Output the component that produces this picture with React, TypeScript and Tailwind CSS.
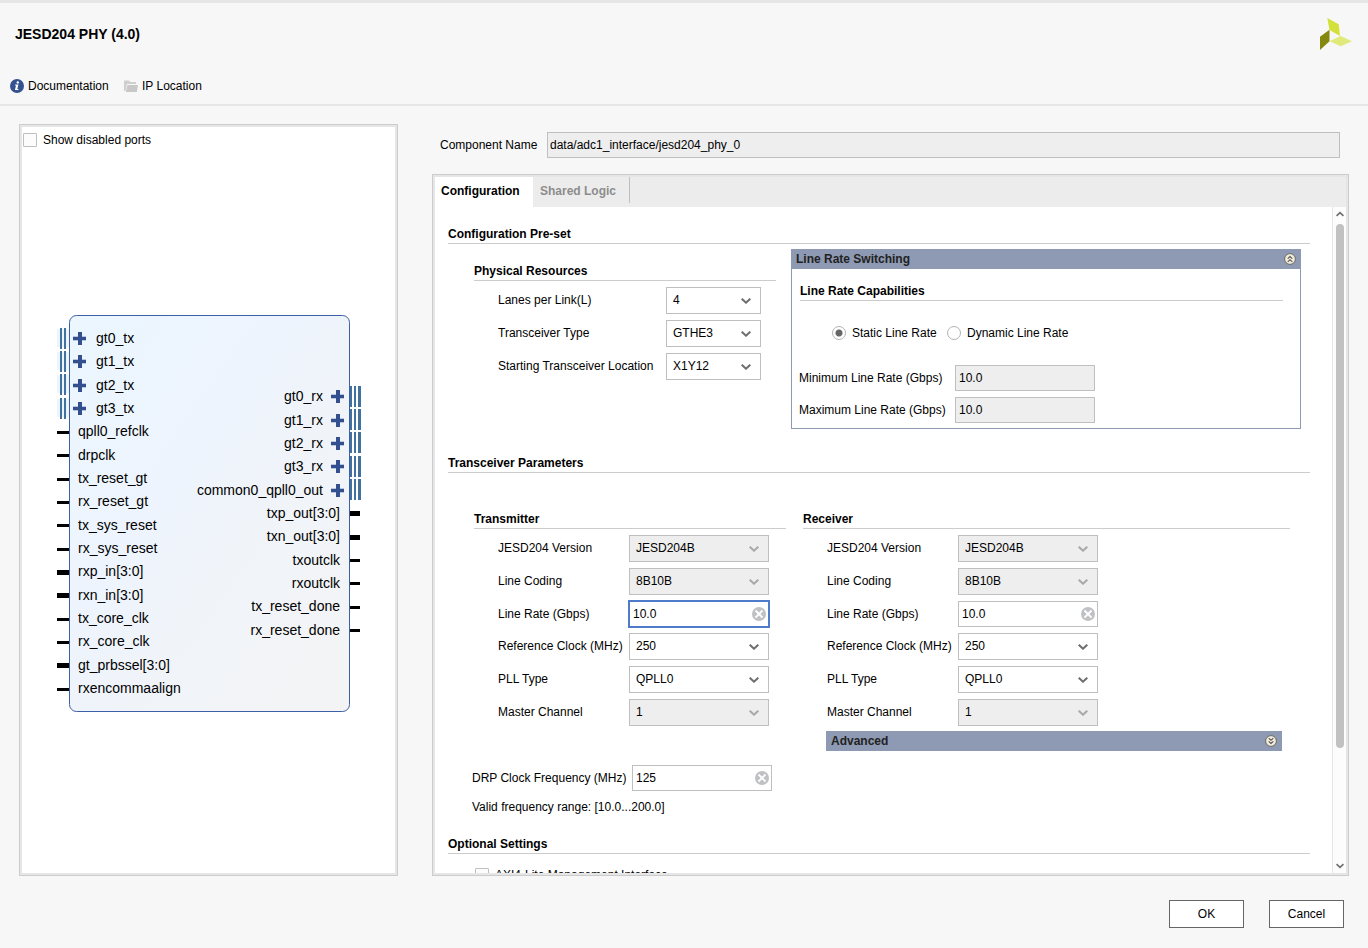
import { useState } from 'react'
import type { ReactNode } from 'react'
import clsx from 'clsx'

type PinKind = 'group' | 'wire' | 'bus'

interface Port {
  name: string
  kind: PinKind
}

const LEFT_PORTS: Port[] = [
  { name: 'gt0_tx', kind: 'group' },
  { name: 'gt1_tx', kind: 'group' },
  { name: 'gt2_tx', kind: 'group' },
  { name: 'gt3_tx', kind: 'group' },
  { name: 'qpll0_refclk', kind: 'wire' },
  { name: 'drpclk', kind: 'wire' },
  { name: 'tx_reset_gt', kind: 'wire' },
  { name: 'rx_reset_gt', kind: 'wire' },
  { name: 'tx_sys_reset', kind: 'wire' },
  { name: 'rx_sys_reset', kind: 'wire' },
  { name: 'rxp_in[3:0]', kind: 'bus' },
  { name: 'rxn_in[3:0]', kind: 'bus' },
  { name: 'tx_core_clk', kind: 'wire' },
  { name: 'rx_core_clk', kind: 'wire' },
  { name: 'gt_prbssel[3:0]', kind: 'bus' },
  { name: 'rxencommaalign', kind: 'wire' },
]

const RIGHT_PORTS: Port[] = [
  { name: 'gt0_rx', kind: 'group' },
  { name: 'gt1_rx', kind: 'group' },
  { name: 'gt2_rx', kind: 'group' },
  { name: 'gt3_rx', kind: 'group' },
  { name: 'common0_qpll0_out', kind: 'group' },
  { name: 'txp_out[3:0]', kind: 'bus' },
  { name: 'txn_out[3:0]', kind: 'bus' },
  { name: 'txoutclk', kind: 'wire' },
  { name: 'rxoutclk', kind: 'wire' },
  { name: 'tx_reset_done', kind: 'wire' },
  { name: 'rx_reset_done', kind: 'wire' },
]

// distance between two ports of the symbol
const PITCH = 70 / 3

function Plus({ x, y }: { x: number; y: number }) {
  return (
    <g>
      <rect x={x} y={y - 2} width={13} height={5} fill="#b9c6e0" />
      <rect x={x} y={y - 1} width={13} height={3} fill="#334f8d" />
      <rect x={x + 5} y={y - 6} width={4} height={13} fill="#334f8d" />
    </g>
  )
}

function Pin({ x, y, width, kind }: { x: number; y: number; width: number; kind: PinKind }) {
  const h = kind === 'bus' ? 5 : 3
  return <rect x={x} y={y - (h - 1) / 2 + 1} width={width} height={h} fill="#000" />
}

function IpSymbol() {
  return (
    <svg width={306} height={397} viewBox="0 0 306 397" className="shrink-0 font-['Liberation_Sans',Arial,sans-serif] text-sm">
      <defs>
        <linearGradient id="symbolFill" x1="0" y1="0" x2="1" y2="1">
          <stop offset="0" stopColor="#ebf6fe" />
          <stop offset="0.4" stopColor="#eef4fd" />
          <stop offset="0.6" stopColor="#f0f4f9" />
          <stop offset="1" stopColor="#f4f4f5" />
        </linearGradient>
      </defs>
      <rect x={13.5} y={0.5} width={280} height={396} rx={7} fill="url(#symbolFill)" stroke="#3d5fa5" />
      {LEFT_PORTS.map((p, i) => {
        const y = Math.round(23 + i * PITCH)
        const pinY = Math.floor(23 + i * PITCH)
        return (
          <g key={p.name}>
            {p.kind === 'group' ? (
              <>
                <rect x={1} y={pinY - 9} width={12} height={18} fill="#edf5fc" />
                <rect x={4} y={pinY - 10} width={2} height={21} fill="#41719f" />
                <rect x={8} y={pinY - 10} width={2} height={21} fill="#41719f" />
                <Plus x={17} y={y} />
              </>
            ) : (
              <Pin x={1} y={pinY} width={12} kind={p.kind} />
            )}
            <text x={p.kind === 'group' ? 40 : 22} y={y + 5}>{p.name}</text>
          </g>
        )
      })}
      {RIGHT_PORTS.map((p, i) => {
        const y = Math.round(81.33 + i * PITCH)
        const pinY = Math.floor(81.33 + i * PITCH)
        return (
          <g key={p.name}>
            {p.kind === 'group' ? (
              <>
                <rect x={294} y={pinY - 10} width={11} height={21} fill="#fff" />
                <rect x={294} y={pinY - 10} width={2} height={21} fill="#41719f" />
                <rect x={298} y={pinY - 10} width={2} height={21} fill="#41719f" />
                <rect x={302} y={pinY - 10} width={3} height={21} fill="#41719f" />
                <Plus x={275} y={y} />
              </>
            ) : (
              <Pin x={294} y={pinY} width={10} kind={p.kind} />
            )}
            <text x={p.kind === 'group' ? 267 : 284} y={y + 5} textAnchor="end">{p.name}</text>
          </g>
        )
      })}
    </svg>
  )
}

function Logo() {
  return (
    <svg width={32} height={32} viewBox="0 0 32 32" aria-hidden="true">
      <path d="M7.3 0L18.7 6.3L20 18L9.5 12Z" fill="#d4e13b" />
      <path d="M0 18.7L9.5 11.7V23.3L0 32Z" fill="#84880e" />
      <path d="M9.5 23.3L20.7 18L32 23.3L20.7 28.3Z" fill="#e1e97b" />
    </svg>
  )
}

function InfoIcon() {
  return (
    <svg width={14} height={14} viewBox="0 0 14 14" aria-hidden="true">
      <circle cx={7} cy={7} r={7} fill="#33528f" />
      <circle cx={7.8} cy={3.4} r={1.2} fill="#fff" />
      <path d="M5.2 5.6H8.4L7.3 10H8.6L8.3 11H4.9L6 6.6H5Z" fill="#fff" />
    </svg>
  )
}

function FolderIcon() {
  return (
    <svg width={14} height={14} viewBox="0 0 14 14" aria-hidden="true">
      <path d="M0 1.5H5L6.5 3H12V5H3L1.5 12H0Z" fill="#cfcfcf" />
      <path d="M3.5 6H14L12.8 13H1.8Z" fill="#c8c8c8" />
    </svg>
  )
}

function Chevron({ className }: { className?: string }) {
  return (
    <svg width={10} height={6} viewBox="0 0 10 6" fill="none" stroke="currentColor" strokeWidth={2} className={className} aria-hidden="true">
      <path d="M0.7 0.7L5 4.7L9.3 0.7" />
    </svg>
  )
}

function RoundToggle({ up = false }: { up?: boolean }) {
  return (
    <svg width={12} height={12} viewBox="0 0 12 12" fill="none" className={clsx(up && 'rotate-180')} aria-hidden="true">
      <circle cx={6} cy={6} r={5.4} fill="#efecdf" stroke="#6d6a60" />
      <path d="M3.7 3.2L6 5.3L8.3 3.2M3.7 6.4L6 8.5L8.3 6.4" stroke="#55524a" strokeWidth={1.1} />
    </svg>
  )
}

function Heading({ children }: { children: ReactNode }) {
  return <h2 className="border-b border-[#cccccc] text-xs leading-[18px] font-bold">{children}</h2>
}

interface FieldProps {
  id: string
  label: string
  value: string
  disabled?: boolean
  labelWidth?: string
  width?: string
}

function SelectField({ id, label, value, disabled, labelWidth = 'w-[131px]', width = 'w-[140px]' }: FieldProps) {
  return (
    <div className="flex items-center">
      <label htmlFor={id} className={clsx('shrink-0 pb-0.5 whitespace-nowrap', labelWidth)}>{label}</label>
      <div className={clsx('relative', width)}>
        <select
          id={id}
          disabled={disabled}
          defaultValue={value}
          className="block h-[27px] w-full appearance-none border border-[#bfbfbf] bg-white px-1.5 pb-0.5 text-black opacity-100 outline-none disabled:bg-[#eeeeee]"
        >
          <option>{value}</option>
        </select>
        <Chevron className={clsx('pointer-events-none absolute top-[11px] right-2.5', disabled ? 'text-[#a8a8a8]' : 'text-[#6e6e6e]')} />
      </div>
    </div>
  )
}

function ClearField({ id, label, value, focused, labelWidth = 'w-[131px]' }: FieldProps & { focused?: boolean }) {
  const [text, setText] = useState(value)

  return (
    <div className="flex items-center">
      <label htmlFor={id} className={clsx('shrink-0 whitespace-nowrap', labelWidth)}>{label}</label>
      <div className="relative w-[140px]">
        <input
          id={id}
          value={text}
          onChange={e => setText(e.target.value)}
          className={clsx(
            'block h-[26px] w-full border bg-white pr-6 pl-[3px] outline-none',
            focused ? 'border-[#4f7bcb] ring-1 ring-[#4f7bcb]' : 'border-[#bfbfbf]',
          )}
        />
        <button aria-label={`Clear ${label}`} onClick={() => setText('')} className="absolute top-1.5 right-[3px]">
          <svg width={14} height={14} viewBox="0 0 14 14">
            <circle cx={7} cy={7} r={7} fill="#c0c1c4" />
            <path d="M3.5 3.5L10.5 10.5M10.5 3.5L3.5 10.5" stroke="#fff" strokeWidth={1.8} />
          </svg>
        </button>
      </div>
    </div>
  )
}

function ReadOnlyField({ id, label, value }: FieldProps) {
  return (
    <div className="flex items-center">
      <label htmlFor={id} className="w-[156px] shrink-0 whitespace-nowrap">{label}</label>
      <input id={id} value={value} readOnly className="h-[26px] w-[140px] border border-[#bfbfbf] bg-[#eeeeee] px-[3px] outline-none" />
    </div>
  )
}

function ChannelSettings({ prefix, focused }: { prefix: string; focused?: boolean }) {
  return (
    <div className="mt-1.5 flex flex-col gap-1.5 pl-6">
      <SelectField id={`${prefix}-version`} label="JESD204 Version" value="JESD204B" disabled />
      <SelectField id={`${prefix}-coding`} label="Line Coding" value="8B10B" disabled />
      <ClearField id={`${prefix}-rate`} label="Line Rate (Gbps)" value="10.0" focused={focused} />
      <SelectField id={`${prefix}-refclk`} label="Reference Clock (MHz)" value="250" />
      <SelectField id={`${prefix}-pll`} label="PLL Type" value="QPLL0" />
      <SelectField id={`${prefix}-master`} label="Master Channel" value="1" disabled />
    </div>
  )
}

const RADIO = 'size-3.5 appearance-none rounded-full border border-[#b3b3b3] bg-white checked:bg-[radial-gradient(circle,#666666_3px,#ffffff_4px)]'
const CHECKBOX = 'size-3.5 shrink-0 appearance-none rounded-[1px] border border-[#bfbfbf] bg-[#fcfcfc] checked:bg-[#33528f]'

function Configuration() {
  const [dynamic, setDynamic] = useState(false)

  return (
    <div className="min-w-0 flex-1 overflow-hidden pt-[18px] pr-[22px] pl-[13px]">
      <Heading>Configuration Pre-set</Heading>
      <div className="flex gap-[15px] pt-[5px] pr-[9px] pl-[26px]">
        <section className="w-[302px] shrink-0 pt-[13px]">
          <Heading>Physical Resources</Heading>
          <div className="mt-1.5 flex flex-col gap-1.5 pl-6">
            <SelectField id="lanes" label="Lanes per Link(L)" value="4" labelWidth="w-[168px]" width="w-[95px]" />
            <SelectField id="type" label="Transceiver Type" value="GTHE3" labelWidth="w-[168px]" width="w-[95px]" />
            <SelectField id="location" label="Starting Transceiver Location" value="X1Y12" labelWidth="w-[168px]" width="w-[95px]" />
          </div>
        </section>
        <section className="min-w-0 flex-1 border border-[#8e9ab3] pb-[5px]">
          <button className="flex h-[19px] w-full items-center justify-between bg-[#8e9ab3] px-1 pb-px font-bold text-[#222222]">
            Line Rate Switching
            <RoundToggle up />
          </button>
          <div className="mt-[13px] mr-[17px] ml-2">
            <Heading>Line Rate Capabilities</Heading>
          </div>
          <div className="mt-6 flex items-center gap-2 pl-10">
            <label className="flex w-[107px] items-center gap-1.5">
              <input type="radio" name="rate" checked={!dynamic} onChange={() => setDynamic(false)} className={RADIO} />
              Static Line Rate
            </label>
            <label className="flex items-center gap-1.5">
              <input type="radio" name="rate" checked={dynamic} onChange={() => setDynamic(true)} className={RADIO} />
              Dynamic Line Rate
            </label>
          </div>
          <div className="mt-6 flex flex-col gap-1.5 pl-[7px]">
            <ReadOnlyField id="min-rate" label="Minimum Line Rate (Gbps)" value="10.0" />
            <ReadOnlyField id="max-rate" label="Maximum Line Rate (Gbps)" value="10.0" />
          </div>
        </section>
      </div>

      <div className="mt-[25px]">
        <Heading>Transceiver Parameters</Heading>
      </div>
      <div className="mt-[37px] flex gap-[17px] pr-5 pl-[26px]">
        <section className="w-[312px] shrink-0">
          <Heading>Transmitter</Heading>
          <ChannelSettings prefix="tx" focused />
        </section>
        <section className="min-w-0 flex-1">
          <Heading>Receiver</Heading>
          <ChannelSettings prefix="rx" />
          <button className="mt-[5px] mr-2 ml-[23px] flex h-5 w-[calc(100%-31px)] items-center justify-between bg-[#8e9ab3] px-[5px] font-bold text-[#222222]">
            Advanced
            <RoundToggle />
          </button>
        </section>
      </div>

      <div className="mt-3.5 pl-6">
        <ClearField id="drp" label="DRP Clock Frequency (MHz)" value="125" labelWidth="w-[160px]" />
        <p className="mt-2">Valid frequency range: [10.0...200.0]</p>
      </div>

      <div className="mt-5">
        <Heading>Optional Settings</Heading>
      </div>
      <label className="mt-[13px] ml-[27px] flex items-center gap-1.5">
        <input type="checkbox" className={CHECKBOX} />
        AXI4-Lite Management Interface
      </label>
    </div>
  )
}

function Scrollbar() {
  return (
    <div className="flex w-[14px] shrink-0 flex-col items-center border-l border-[#e6e6e6] bg-[#fcfcfc] py-1 text-[#6e6e6e]">
      <Chevron className="w-2 shrink-0 rotate-180" />
      <div className="mt-[7px] mb-2 w-2 flex-1">
        <div className="h-[83%] rounded-full bg-[#c1c1c1]" />
      </div>
      <Chevron className="w-2 shrink-0" />
    </div>
  )
}

export default function App() {
  const [tab, setTab] = useState('config')

  return (
    <div className="flex h-screen flex-col border-t-[3px] border-[#e6e6e6] bg-[#f7f7f7] font-['Liberation_Sans',Arial,sans-serif] text-xs text-black">
      {/* Header */}
      <header className="border-b-2 border-[#e6e6e6] pt-[15px] pb-2.5">
        <div className="flex items-center justify-between pr-4 pl-[15px]">
          <h1 className="text-sm font-bold">JESD204 PHY (4.0)</h1>
          <Logo />
        </div>
        <div className="mt-7 flex gap-3 pl-2.5">
          <button className="flex w-[102px] items-center gap-1">
            <InfoIcon />
            Documentation
          </button>
          <button className="flex items-center gap-1">
            <FolderIcon />
            IP Location
          </button>
        </div>
      </header>

      <main className="flex min-h-0 flex-1 gap-[34px] px-[19px] pt-[18px]">
        {/* Symbol preview */}
        <section className="w-[379px] shrink-0 border border-[#cccccc]">
          <div className="flex h-full flex-col border-2 border-[#e6e6e6] bg-white">
            <label className="flex items-center gap-1.5 pt-[5px] pb-1.5 pl-px">
              <input type="checkbox" className={CHECKBOX} />
              Show disabled ports
            </label>
            <div className="flex min-h-0 flex-1 items-center justify-center">
              <IpSymbol />
            </div>
          </div>
        </section>

        {/* Settings */}
        <section className="flex min-w-0 flex-1 flex-col pt-2">
          <div className="flex items-center gap-[5px] pr-[9px] pl-2">
            <label htmlFor="component" className="w-[102px] shrink-0">Component Name</label>
            <input
              id="component"
              readOnly
              value="data/adc1_interface/jesd204_phy_0"
              className="h-[26px] min-w-0 flex-1 border border-[#bfbfbf] bg-[#eeeeee] px-0.5 outline-none"
            />
          </div>
          <div className="mt-4 min-h-0 flex-1 border border-[#cccccc]">
            <div className="flex h-full flex-col border-2 border-[#e6e6e6] bg-white">
              <div role="tablist" className="flex h-[30px] shrink-0 items-start bg-[#ececec] font-bold">
                <button
                  role="tab"
                  aria-selected={tab === 'config'}
                  onClick={() => setTab('config')}
                  className={clsx('h-full w-[98px] pb-0.5 pl-1.5 text-left', tab === 'config' ? 'bg-white' : 'text-[#8c8c8c]')}
                >
                  Configuration
                </button>
                <button
                  role="tab"
                  aria-selected={tab === 'shared'}
                  onClick={() => setTab('shared')}
                  className={clsx('h-[26px] w-[97px] border-r border-[#bfbfbf] pt-0.5 pl-[7px] text-left', tab === 'shared' ? 'bg-white' : 'text-[#8c8c8c]')}
                >
                  Shared Logic
                </button>
              </div>
              <div className="flex min-h-0 flex-1">
                {tab === 'config' ? <Configuration /> : <div className="flex-1" />}
                <Scrollbar />
              </div>
            </div>
          </div>
        </section>
      </main>

      <footer className="flex justify-end gap-[25px] pt-6 pr-6 pb-5">
        <button className="h-7 w-[75px] border border-[#666666] bg-white">OK</button>
        <button className="h-7 w-[75px] border border-[#666666] bg-white">Cancel</button>
      </footer>
    </div>
  )
}
